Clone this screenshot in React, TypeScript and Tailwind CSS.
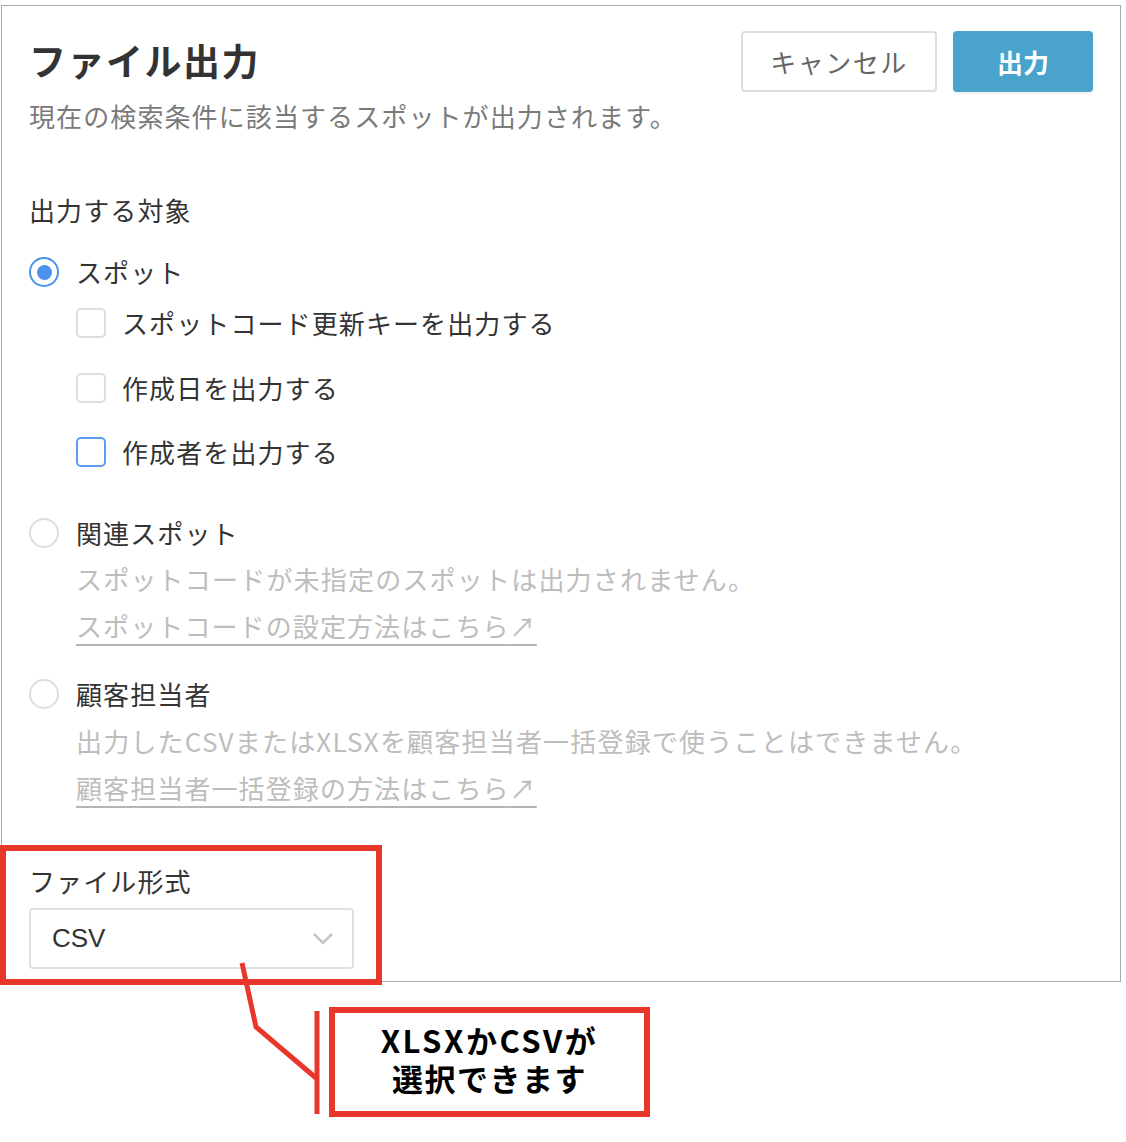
// File export dialog, annotated screenshot: the file-format
// select is framed in red with a callout box below the panel.

const FONT = "font-['Noto_Sans_CJK_JP','Noto_Sans',sans-serif]";

function Radio({ checked }: { checked?: boolean }) {
  if (checked) {
    return (
      <span className="flex h-[30px] w-[30px] shrink-0 items-center justify-center rounded-full border-2 border-[#4a92ec] bg-white">
        <span className="h-[15px] w-[15px] rounded-full bg-[#4a92ec]" />
      </span>
    );
  }
  return (
    <span className="h-[30px] w-[30px] shrink-0 rounded-full border-2 border-[#dedede] bg-white" />
  );
}

function Checkbox({ focused }: { focused?: boolean }) {
  return (
    <span
      className={
        focused
          ? "h-[30px] w-[30px] shrink-0 rounded-[5px] border-2 border-[#5a9cf0] bg-white"
          : "h-[30px] w-[30px] shrink-0 rounded-[5px] border-2 border-[#dedede] bg-white"
      }
    />
  );
}

function CheckRow({ label, focused, className }: { label: string; focused?: boolean; className: string }) {
  return (
    <div className={`flex h-[36px] items-center gap-[16px] pl-[47px] ${className}`}>
      <Checkbox focused={focused} />
      <span className="text-[26px] leading-[36px] tracking-[1.1px] text-[#333]">{label}</span>
    </div>
  );
}

function RadioRow({ label, checked, className }: { label: string; checked?: boolean; className: string }) {
  return (
    <div className={`flex h-[36px] items-center gap-[17px] ${className}`}>
      <Radio checked={checked} />
      <span className="text-[26px] leading-[36px] tracking-[1.1px] text-[#333]">{label}</span>
    </div>
  );
}

function Muted({ children, className }: { children: React.ReactNode; className: string }) {
  return (
    <p className={`pl-[47px] text-[26px] leading-[36px] tracking-[1.2px] text-[#bdbdbd] ${className}`}>
      {children}
    </p>
  );
}

function HelpLink({ children, className }: { children: React.ReactNode; className: string }) {
  return (
    <p className={`pl-[47px] text-[26px] leading-[36px] tracking-[1.1px] text-[#bdbdbd] ${className}`}>
      <span className="underline decoration-[#b5b5b5] decoration-2 underline-offset-[7px]">
        {children}↗
      </span>
    </p>
  );
}

export default function App() {
  return (
    <div className={`relative h-[1142px] w-[1126px] bg-white ${FONT}`}>
      <div className="ml-[1px] pt-[5px]">
        <section className="h-[977px] w-[1120px] border border-[#a9a9a9] bg-white pl-[27px] pr-[27px]">
          <header className="flex h-[86px] items-end justify-between">
            <h1 className="mb-[10px] text-[37px] font-bold leading-[44px] tracking-[1.5px] text-[#333]">
              ファイル出力
            </h1>
            <div className="flex gap-[16px]">
              <button className="h-[61px] w-[196px] rounded-[4px] border-2 border-[#dddddd] bg-white text-[26px] tracking-[1.5px] text-[#666]">
                キャンセル
              </button>
              <button className="h-[61px] w-[140px] rounded-[4px] bg-[#49a3cb] text-[26px] font-bold text-white shadow-[0_2px_2px_rgba(0,0,0,0.06)]">
                出力
              </button>
            </div>
          </header>

          <p className="mt-[6px] text-[26px] leading-[36px] tracking-[1.1px] text-[#7a7a7a]">
            現在の検索条件に該当するスポットが出力されます。
          </p>

          <p className="mt-[58px] text-[26px] leading-[36px] tracking-[1.1px] text-[#333]">出力する対象</p>

          <RadioRow checked label="スポット" className="mt-[26px]" />
          <CheckRow label="スポットコード更新キーを出力する" className="mt-[15px]" />
          <CheckRow label="作成日を出力する" className="mt-[29px]" />
          <CheckRow focused label="作成者を出力する" className="mt-[28px]" />

          <RadioRow label="関連スポット" className="mt-[45px]" />
          <Muted className="mt-[10px]">スポットコードが未指定のスポットは出力されません。</Muted>
          <HelpLink className="mt-[11px]">スポットコードの設定方法はこちら</HelpLink>

          <RadioRow label="顧客担当者" className="mt-[32px]" />
          <Muted className="mt-[11px]">出力したCSVまたはXLSXを顧客担当者一括登録で使うことはできません。</Muted>
          <HelpLink className="mt-[11px]">顧客担当者一括登録の方法はこちら</HelpLink>

          <p className="mt-[57px] text-[26px] leading-[36px] tracking-[1.1px] text-[#333]">ファイル形式</p>
          <div className="mt-[9px] flex h-[61px] w-[325px] items-center justify-between rounded-[4px] border-2 border-[#e0e0e0] bg-white pl-[21px] pr-[18px]">
            <span className="font-['Liberation_Sans',sans-serif] text-[26px] text-[#333]">CSV</span>
            <svg width="22" height="14" viewBox="0 0 22 14" fill="none">
              <path d="M2 2l9 9 9-9" stroke="#c4c4c4" strokeWidth="2.5" />
            </svg>
          </div>
        </section>
      </div>

      {/* annotation: callout box below the panel */}
      <div className="ml-[329px] mt-[25px] flex h-[110px] w-[321px] items-center justify-center border-[6px] border-[#e8372a] bg-white pb-[6px]">
        <p className="text-center text-[31px] font-bold leading-[38px] text-black">
          <span className="tracking-[2.5px]">XLSXかCSVが</span>
          <br />
          <span className="tracking-[1.5px]">選択できます</span>
        </p>
      </div>

      {/* annotation: red frame over the file format block */}
      <div className="pointer-events-none absolute left-0 top-[845px] h-[140px] w-[382px] border-[6px] border-[#e8372a]" />

      {/* annotation: leader lines */}
      <svg className="pointer-events-none absolute left-0 top-0" width="1126" height="1142" fill="none">
        <path d="M242 963 L256 1027 L316 1078" stroke="#e8372a" strokeWidth="5" />
        <path d="M317 1011 V1114" stroke="#e8372a" strokeWidth="5" />
      </svg>
    </div>
  );
}
